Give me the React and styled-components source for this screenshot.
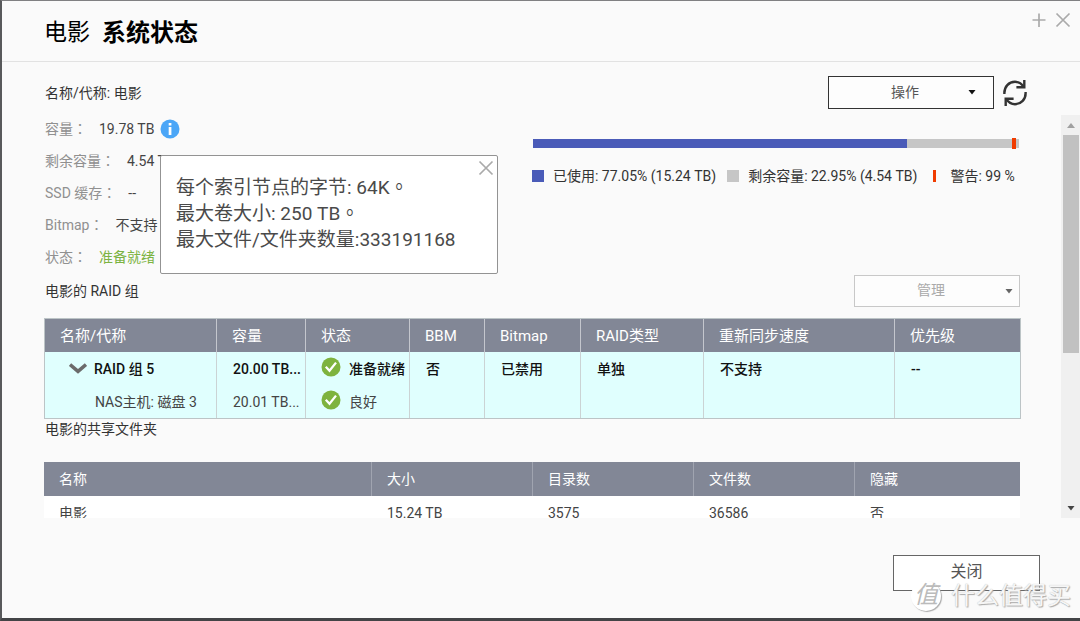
import React from "react";
import styled, { createGlobalStyle, css } from "styled-components";

const GlobalStyle = createGlobalStyle`
  * { box-sizing: border-box; }
  body {
    margin: 0;
    background: #fafafa;
    color: #333;
    font: 14px/20px Roboto, "Noto Sans CJK SC", sans-serif;
  }
  button, select, input { font: inherit; color: inherit; }
`;

const Window = styled.main`
  position: relative;
  display: flex;
  flex-direction: column;
  height: 100vh;
  border-top: 1px solid #808082;
  border-left: 2px solid #58595b;
  border-bottom: 3px solid #434446;
  background: #fafafa;
`;

const TitleBar = styled.header`
  display: flex;
  flex: none;
  align-items: flex-start;
  justify-content: space-between;
  height: 61px;
  padding: 11px 9px 0 42px;
  border-bottom: 1px solid #e2e2e2;
`;

const Title = styled.h1`
  display: flex;
  gap: 12px;
  margin: 5px 0 0;
  color: #000;
  font-size: 23px;
  line-height: 32px;
  font-weight: 400;

  strong { font-size: 24px; }
`;

const WindowTools = styled.div`
  display: flex;
  gap: 8px;
`;

const IconButton = styled.button`
  display: flex;
  flex: none;
  padding: 0;
  border: 0;
  background: none;
  cursor: pointer;
`;

const Toolbar = styled.div`
  display: flex;
  flex: none;
  align-items: center;
  height: 53px;
  padding: 14px 53px 6px 43px;
`;

const VolumeName = styled.p`
  flex: 1;
  margin: 0;
  font-size: 14px;
`;

const SelectBox = styled.div`
  position: relative;
  width: 166px;
  height: ${(p) => p.$height}px;
  margin-right: ${(p) => (p.$muted ? 0 : 9)}px;

  select {
    width: 100%;
    height: 100%;
    padding: 0 12px 2px 0;
    border: ${(p) => (p.$muted ? "1px solid #c8c8c8" : "1px solid #333")};
    border-radius: 0;
    background: #fdfdfd;
    color: ${(p) => (p.$muted ? "#aaa" : "#555")};
    opacity: 1;
    appearance: none;
    text-align: center;
    text-align-last: center;
  }

  svg {
    position: absolute;
    top: 14px;
    right: ${(p) => (p.$muted ? 7 : 18)}px;
    pointer-events: none;
  }
`;

const Viewport = styled.div`
  display: flex;
  flex: 1;
  min-height: 0;
`;

const Content = styled.div`
  flex: 1;
  min-width: 0;
  padding: 0 41px 0 42px;
  overflow: hidden;
`;

const Overview = styled.section`
  display: grid;
  grid-template-columns: 1fr 1fr;
`;

const Facts = styled.dl`
  display: flex;
  flex-direction: column;
  gap: 4px;
  margin: 0;
  padding-left: 1px;
`;

const Fact = styled.div`
  position: relative;
  display: flex;
  align-items: center;
  gap: 12px;
  height: 28px;
`;

const FactName = styled.dt`
  color: #909090;
`;

const FactValue = styled.dd`
  display: flex;
  align-items: center;
  gap: 6px;
  margin: 0;
  color: ${(p) => (p.$ready ? "#7cb342" : "#444")};
`;

const WidePunctuation = styled.span`
  font-family: "Noto Sans CJK TC", sans-serif;
  line-height: 0;
`;

const InfoPopover = styled.aside`
  position: absolute;
  z-index: 2;
  top: 40px;
  left: 115px;
  width: 338px;
  height: 119px;
  padding: 19px 15px;
  border: 1px solid #939393;
  border-radius: 2px;
  background: #fff;
  color: #4a4a4a;
  font-size: 19px;
  line-height: 26px;
  white-space: nowrap;

  p { margin: 0; }
  button { position: absolute; top: 4px; right: 3px; }
`;

const Usage = styled.div`
  padding: 24px 1px 0;
`;

const UsageTrack = styled.div`
  position: relative;
  height: 9px;
  background: #c6c6c6;
`;

const UsageFill = styled.div`
  height: 100%;
  background: #4a5bb8;
`;

const UsageMark = styled.div`
  position: absolute;
  top: -1px;
  width: 4px;
  height: 11px;
  margin-left: -2px;
  background: #f03c00;
`;

const Legend = styled.ul`
  display: flex;
  gap: 11px;
  margin: 18px 0 0 -1px;
  padding: 0;
  list-style: none;
  white-space: nowrap;
`;

const LegendItem = styled.li`
  display: flex;
  align-items: center;
  gap: ${(p) => (p.$thin ? 14 : 9)}px;
  padding-left: ${(p) => (p.$thin ? 5 : 0)}px;

  &::before {
    content: "";
    width: ${(p) => (p.$thin ? 3 : 12)}px;
    height: 12px;
    background: ${(p) => p.$color};
  }
`;

const SectionHead = styled.div`
  display: flex;
  align-items: center;
  justify-content: space-between;
  height: 32px;
  margin: 4px 0 11px;
`;

const SectionTitle = styled.h2`
  margin: 0;
  padding-left: 1px;
  color: #333;
  font-size: 14px;
  line-height: 20px;
  font-weight: 400;
`;

const tableBase = css`
  width: 100%;
  table-layout: fixed;
  border-collapse: separate;
  border-spacing: 0;

  th, td {
    padding: 0 0 0 15px;
    text-align: left;
    font-weight: 400;
    white-space: nowrap;
  }
  th {
    height: 34px;
    background: #828796;
    color: #fff;
  }
`;

const RaidTable = styled.table`
  ${tableBase}
  border: 1px solid #bcc4c6;

  th {
    height: 33px;
    border-right: 1px solid #c4c6cd;
    font-size: 15px;
  }
  td {
    height: 33px;
    padding-left: 16px;
    border-right: 1px solid #cbd3d4;
    background: #e0fffe;
  }
  th:last-child, td:last-child { border-right: 0; }
`;

const RaidRow = styled.tr`
  td {
    color: ${(p) => (p.$group ? "#111" : "#444")};
    font-weight: ${(p) => (p.$group ? 500 : 400)};
  }
`;

const FolderTable = styled.table`
  ${tableBase}
  margin-top: 23px;

  th { border-right: 1px solid #a0a4b0; }
  th:last-child { border-right: 0; }
  td {
    height: 34px;
    background: #fff;
    color: #444;
  }
`;

const CellLine = styled.span`
  display: flex;
  align-items: center;
  gap: ${(p) => p.$gap}px;
  padding-left: ${(p) => p.$indent || 0}px;

  button { width: 18px; }
`;

const StatusLine = styled.span`
  display: flex;
  align-items: flex-start;
  gap: 8px;
  height: 24px;
  margin-left: -1px;
  line-height: 24px;
`;

const ScrollBar = styled.div`
  display: flex;
  flex: none;
  flex-direction: column;
  align-items: stretch;
  width: 19px;
  background: #f0f0f0;

  button {
    height: 20px;
    align-items: center;
    justify-content: center;
  }
`;

const ScrollTrack = styled.div`
  flex: 1;
  padding: 0 1px 0 2px;
`;

const ScrollThumb = styled.div`
  height: 60%;
  background: #c1c1c1;
`;

const Footer = styled.footer`
  display: flex;
  flex: none;
  justify-content: flex-end;
  height: 100px;
  padding: 37px 40px 0 0;
`;

const CloseButton = styled.button`
  width: 147px;
  height: 36px;
  padding: 0 0 2px;
  border: 1px solid #666;
  background: #fff;
  color: #555;
  font-size: 16px;
`;

const Watermark = styled.div`
  position: absolute;
  right: 9px;
  bottom: 6px;
  display: flex;
  align-items: center;
  gap: 10px;
  color: #f6f6f6;
  font-size: 24px;
  line-height: 32px;
  text-shadow: 1px 1px 1px #aaa, 0 0 1px #bbb;
`;

const WatermarkBadge = styled.span`
  width: 30px;
  height: 30px;
  border-radius: 50%;
  background: #fff;
  box-shadow: 1px 1px 1px #aaa;
  color: #bbb;
  font-size: 24px;
  line-height: 28px;
  text-align: center;
  text-shadow: none;
  font-style: italic;
`;

const Cross = () => (
  <svg width="16" height="16" viewBox="0 0 16 16" stroke="#aaa" strokeWidth="1.7">
    <path d="M1.5 1.5 14.5 14.5M14.5 1.5 1.5 14.5" />
  </svg>
);

const Plus = () => (
  <svg width="16" height="16" viewBox="0 0 16 16" stroke="#aaa" strokeWidth="1.7">
    <path d="M8 1.5V15M1.5 8H14.5" />
  </svg>
);

const Caret = ({ color = "#111", up }) => (
  <svg width="8" height="5" viewBox="0 0 8 5" fill={color}>
    <path d={up ? "M4 0 8 5H0Z" : "M0.5 0H7.5L4 4.500Z"} />
  </svg>
);

const RefreshIcon = () => (
  <svg width="24" height="28" viewBox="0 0 24 28" fill="none" stroke="#333" strokeWidth="2.4">
    <path d="M1.4 15C1 7.5 6 2.8 12 2.8c3.8 0 6.600 1.800 8.600 5" />
    <path d="M21.3 1V8.2H13.4" />
    <path d="M22.6 13C23 20.500 18 25.200 12 25.200c-3.800 0-6.600-1.800-8.600-5" />
    <path d="M2.700 27V19.800H10.600" />
  </svg>
);

const InfoIcon = () => (
  <svg width="20" height="20" viewBox="0 0 20 20">
    <circle cx="10" cy="10" r="9.500" fill="#4ba6f7" />
    <path d="M8.700 4h2.700v2.500H8.700zM8.700 8h2.700v8H8.700z" fill="#fff" />
  </svg>
);

const CheckIcon = () => (
  <svg width="20" height="20" viewBox="0 0 20 20">
    <circle cx="10" cy="10" r="9.500" fill="#7eb33e" />
    <path d="M4.800 9.800 8.500 13.700 15 5.600" fill="none" stroke="#fff" strokeWidth="2.300" />
  </svg>
);

const Chevron = () => (
  <svg width="18" height="11" viewBox="0 0 18 11" fill="none" stroke="#6b6b6b" strokeWidth="3.600">
    <path d="M1 1.600 9 8.400 17 1.600" />
  </svg>
);

const raidColumns = [
  ["名称/代称", 172],
  ["容量", 89],
  ["状态", 104],
  ["BBM", 75],
  ["Bitmap", 96],
  ["RAID类型", 123],
  ["重新同步速度", 191],
  ["优先级", 125],
];

const folderColumns = [
  ["名称", 328],
  ["大小", 161],
  ["目录数", 161],
  ["文件数", 161],
  ["隐藏", 165],
];

const Columns = ({ items }) => (
  <>
    <colgroup>
      {items.map(([name, width]) => (
        <col key={name} width={width} />
      ))}
    </colgroup>
    <thead>
      <tr>
        {items.map(([name]) => (
          <th key={name} scope="col">{name}</th>
        ))}
      </tr>
    </thead>
  </>
);

const Row = ({ name, ready, children }) => (
  <Fact>
    <FactName>
      {name}
      <WidePunctuation>：</WidePunctuation>
    </FactName>
    <FactValue $ready={ready}>{children}</FactValue>
  </Fact>
);

export default function App() {
  return (
    <Window>
      <GlobalStyle />
      <TitleBar>
        <Title>
          <span>电影</span>
          <strong>系统状态</strong>
        </Title>
        <WindowTools>
          <IconButton aria-label="最大化"><Plus /></IconButton>
          <IconButton aria-label="关闭窗口"><Cross /></IconButton>
        </WindowTools>
      </TitleBar>

      <Toolbar>
        <VolumeName>名称/代称: 电影</VolumeName>
        <SelectBox $height={33}>
          <select aria-label="操作"><option>操作</option></select>
          <Caret />
        </SelectBox>
        <IconButton aria-label="刷新"><RefreshIcon /></IconButton>
      </Toolbar>

      <Viewport>
        <Content>
          <Overview>
            <Facts>
              <Row name="容量">
                19.78 TB
                <IconButton aria-label="容量信息"><InfoIcon /></IconButton>
                <InfoPopover>
                  <p>每个索引节点的字节: 64K<WidePunctuation>。</WidePunctuation></p>
                  <p>最大卷大小: 250 TB<WidePunctuation>。</WidePunctuation></p>
                  <p>最大文件/文件夹数量:333191168</p>
                  <IconButton aria-label="关闭提示"><Cross /></IconButton>
                </InfoPopover>
              </Row>
              <Row name="剩余容量">4.54 TB</Row>
              <Row name="SSD 缓存">--</Row>
              <Row name="Bitmap">不支持</Row>
              <Row name="状态" ready>准备就绪</Row>
            </Facts>
            <Usage>
              <UsageTrack>
                <UsageFill style={{ width: "77.05%" }} />
                <UsageMark style={{ left: "99%" }} />
              </UsageTrack>
              <Legend>
                <LegendItem $color="#4a5bb8">已使用: 77.05% (15.24 TB)</LegendItem>
                <LegendItem $color="#c6c6c6">剩余容量: 22.95% (4.54 TB)</LegendItem>
                <LegendItem $color="#f03c00" $thin>警告: 99 %</LegendItem>
              </Legend>
            </Usage>
          </Overview>

          <SectionHead>
            <SectionTitle>电影的 RAID 组</SectionTitle>
            <SelectBox $height={32} $muted>
              <select aria-label="管理" disabled><option>管理</option></select>
              <Caret color="#666" />
            </SelectBox>
          </SectionHead>

          <RaidTable>
            <Columns items={raidColumns} />
            <tbody>
              <RaidRow $group>
                <td>
                  <CellLine $gap={7} $indent={8}>
                    <IconButton aria-label="收起 RAID 组 5"><Chevron /></IconButton>
                    RAID 组 5
                  </CellLine>
                </td>
                <td>20.00 TB...</td>
                <td><StatusLine><CheckIcon />准备就绪</StatusLine></td>
                <td>否</td>
                <td>已禁用</td>
                <td>单独</td>
                <td>不支持</td>
                <td>--</td>
              </RaidRow>
              <RaidRow>
                <td><CellLine $indent={34}>NAS主机: 磁盘 3</CellLine></td>
                <td>20.01 TB...</td>
                <td><StatusLine><CheckIcon />良好</StatusLine></td>
                <td /><td /><td /><td /><td />
              </RaidRow>
            </tbody>
          </RaidTable>

          <SectionTitle>电影的共享文件夹</SectionTitle>

          <FolderTable>
            <Columns items={folderColumns} />
            <tbody>
              <tr>
                <td>电影</td>
                <td>15.24 TB</td>
                <td>3575</td>
                <td>36586</td>
                <td>否</td>
              </tr>
            </tbody>
          </FolderTable>
        </Content>

        <ScrollBar>
          <IconButton aria-label="向上滚动"><Caret up color="#a0a0a0" /></IconButton>
          <ScrollTrack><ScrollThumb /></ScrollTrack>
          <IconButton aria-label="向下滚动"><Caret color="#444" /></IconButton>
        </ScrollBar>
      </Viewport>

      <Footer>
        <CloseButton>关闭</CloseButton>
      </Footer>

      <Watermark>
        <WatermarkBadge>值</WatermarkBadge>
        什么值得买
      </Watermark>
    </Window>
  );
}
